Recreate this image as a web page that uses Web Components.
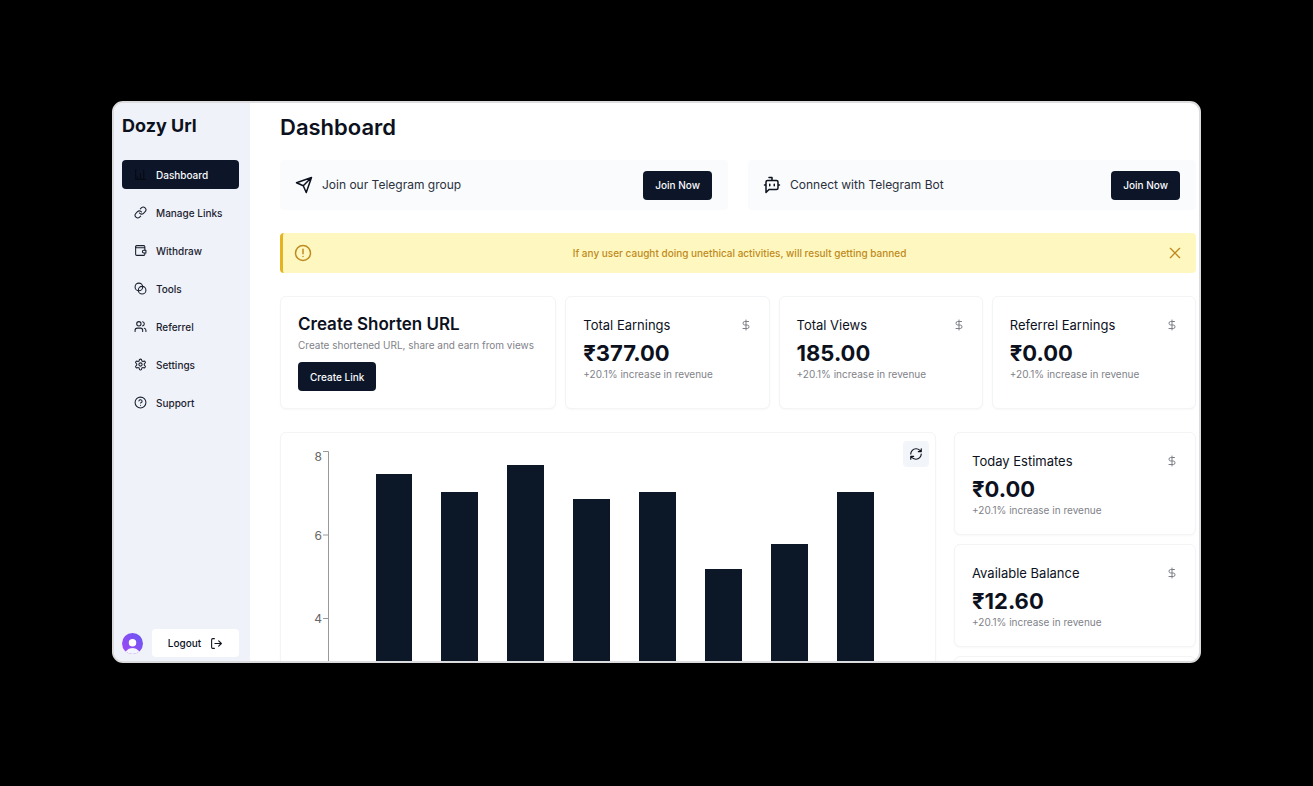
<!DOCTYPE html>
<html lang="en">
<head>
<meta charset="utf-8">
<title>Dozy Url</title>
<style>
  html { background: #000; }
  body {
    margin: 0;
    height: 100vh;
    box-sizing: border-box;
    padding: 101px 112px 123px;
    font-family: Inter, sans-serif;
    color: #0c111d;
  }
</style>
</head>
<body>
<dozy-app></dozy-app>

<script>
const ICONS = {
  chart: '<path d="M12 20V10M18 20V4M6 20v-4M3 3v18h18"/>',
  link: '<path d="M10 13a5 5 0 0 0 7.54.54l3-3a5 5 0 0 0-7.07-7.07l-1.72 1.71"/><path d="M14 11a5 5 0 0 0-7.54-.54l-3 3a5 5 0 0 0 7.07 7.07l1.71-1.71"/>',
  wallet: '<path d="M20 11V7H5a2 2 0 0 1-2-2 2 2 0 0 1 2-2h13a2 2 0 0 1 2 2v2"/><path d="M3 5v14a2 2 0 0 0 2 2h13a2 2 0 0 0 2-2v-2"/><path d="M18 11.500a2.500 2.500 0 0 0 0 5h4v-5Z"/>',
  blend: '<circle cx="9" cy="9" r="7"/><circle cx="15" cy="15" r="7"/>',
  users: '<path d="M16 21v-2a4 4 0 0 0-4-4H6a4 4 0 0 0-4 4v2"/><circle cx="9" cy="7" r="4"/><path d="M22 21v-2a4 4 0 0 0-3-3.87M16 3.13a4 4 0 0 1 0 7.75"/>',
  settings: '<path d="M12.22 2h-.44a2 2 0 0 0-2 2v.18a2 2 0 0 1-1 1.73l-.43.25a2 2 0 0 1-2 0l-.15-.08a2 2 0 0 0-2.73.73l-.22.38a2 2 0 0 0 .73 2.73l.15.1a2 2 0 0 1 1 1.72v.51a2 2 0 0 1-1 1.74l-.15.09a2 2 0 0 0-.73 2.73l.22.38a2 2 0 0 0 2.73.73l.15-.08a2 2 0 0 1 2 0l.43.25a2 2 0 0 1 1 1.73V20a2 2 0 0 0 2 2h.44a2 2 0 0 0 2-2v-.18a2 2 0 0 1 1-1.73l.43-.25a2 2 0 0 1 2 0l.15.08a2 2 0 0 0 2.73-.73l.22-.39a2 2 0 0 0-.73-2.73l-.15-.08a2 2 0 0 1-1-1.74v-.5a2 2 0 0 1 1-1.74l.15-.09a2 2 0 0 0 .73-2.73l-.22-.38a2 2 0 0 0-2.73-.73l-.15.08a2 2 0 0 1-2 0l-.43-.25a2 2 0 0 1-1-1.73V4a2 2 0 0 0-2-2z"/><circle cx="12" cy="12" r="3"/>',
  help: '<circle cx="12" cy="12" r="10"/><path d="M9.09 9a3 3 0 0 1 5.83 1c0 2-3 3-3 3M12 17h.01"/>',
  logout: '<path d="M8 21H5a2 2 0 0 1-2-2V5a2 2 0 0 1 2-2h3M9 12h12M16 7l5 5-5 5"/>',
  send: '<path d="M22 2L15 22l-4-9-9-4zM22 2L11 13"/>',
  bot: '<path d="M12 6V2H8M8 18l-4 4V8a2 2 0 0 1 2-2h12a2 2 0 0 1 2 2v8a2 2 0 0 1-2 2ZM2 12h2M9 11v2M15 11v2M20 12h2"/>',
  alert: '<circle cx="12" cy="12" r="10"/><path d="M12 7v6M12 16.500v.010"/>',
  close: '<path d="M19 5L5 19M5 5l14 14"/>',
  dollar: '<path d="M12 2v20M17 5H9.500a3.500 3.500 0 0 0 0 7h5a3.500 3.500 0 0 1 0 7H6"/>',
  refresh: '<path d="M3 12a9 9 0 0 1 9-9 9.750 9.750 0 0 1 6.740 2.740L21 8M21 3v5h-5M21 12a9 9 0 0 1-9 9 9.750 9.750 0 0 1-6.740-2.740L3 16M8 16H3v5"/>'
};

class Base extends HTMLElement {
  connectedCallback() {
    if (this.shadowRoot) return;
    this.attachShadow({ mode: 'open' }).innerHTML = this.view();
  }
}

customElements.define('dozy-icon', class extends Base {
  view() {
    const size = this.getAttribute('size') || 13;
    return `<style>
      :host { display: block; flex: none; width: ${size}px; height: ${size}px; }
      svg { display: block; width: 100%; height: 100%; }
    </style>
    <svg viewBox="0 0 24 24" fill="none" stroke="currentColor" stroke-width="2" stroke-linecap="round" stroke-linejoin="round" aria-hidden="true">${ICONS[this.getAttribute('name')]}</svg>`;
  }
});

customElements.define('dozy-button', class extends Base {
  view() {
    return `<style>
      :host { display: block; }
      button {
        display: block; height: 29px; padding: 0 12px; border: 0; border-radius: 4px;
        background: #0d1629; color: #f8fafc; font: 500 10px/16px Inter, sans-serif;
        white-space: nowrap; cursor: pointer;
      }
    </style><button type="button"><slot></slot></button>`;
  }
});

customElements.define('dozy-nav-item', class extends Base {
  view() {
    return `<style>
      :host { display: block; }
      a {
        display: flex; align-items: center; gap: 9px; height: 29px; padding: 0 12px;
        border-radius: 4px; font: 500 10px/16px Inter, sans-serif; color: #1c2230;
        text-decoration: none; white-space: nowrap;
      }
      :host([active]) a { background: #0d1629; color: #f8fafc; }
      :host([active]) dozy-icon { color: #060a14; }
    </style>
    <a href="#"><dozy-icon name="${this.getAttribute('icon')}"></dozy-icon><slot></slot></a>`;
  }
});

customElements.define('dozy-sidebar', class extends Base {
  view() {
    return `<style>
      :host {
        display: flex; flex-direction: column; flex: none; width: 136px; box-sizing: border-box;
        padding: 12px 11px 4px 8px; background: #eff3f9;
      }
      .brand { font-size: 18px; line-height: 22px; font-weight: 700; margin-bottom: 23px; }
      nav { display: flex; flex-direction: column; gap: 9px; }
      footer { display: flex; align-items: center; gap: 9px; margin-top: auto; }
      footer svg { flex: none; width: 21px; height: 21px; }
      button {
        flex: 1; display: flex; align-items: center; justify-content: center; gap: 9px;
        height: 28px; padding: 0; border: 0; border-radius: 4px; background: #fff; color: #0c111d;
        font: 500 10px/16px Inter, sans-serif; cursor: pointer;
      }
    </style>
    <div class="brand">Dozy Url</div>
    <nav>
      <dozy-nav-item icon="chart" active>Dashboard</dozy-nav-item>
      <dozy-nav-item icon="link">Manage Links</dozy-nav-item>
      <dozy-nav-item icon="wallet">Withdraw</dozy-nav-item>
      <dozy-nav-item icon="blend">Tools</dozy-nav-item>
      <dozy-nav-item icon="users">Referrel</dozy-nav-item>
      <dozy-nav-item icon="settings">Settings</dozy-nav-item>
      <dozy-nav-item icon="help">Support</dozy-nav-item>
    </nav>
    <footer>
      <svg viewBox="0 0 28 28" role="img" aria-label="Account">
        <defs>
          <linearGradient id="g" x1="0" y1="1" x2="1" y2="0"><stop stop-color="#a546f5"/><stop offset="1" stop-color="#6658f2"/></linearGradient>
          <clipPath id="c"><circle cx="14" cy="14" r="14"/></clipPath>
        </defs>
        <g clip-path="url(#c)"><path fill="url(#g)" d="M0 0h28v28H0z"/>
        <circle cx="14" cy="13" r="5" fill="#fff"/><path fill="#f4f5fc" d="M4 28c0-4 5-8 10-8s10 4 10 8z"/></g>
      </svg>
      <button type="button">Logout <dozy-icon name="logout"></dozy-icon></button>
    </footer>`;
  }
});

customElements.define('dozy-invite', class extends Base {
  view() {
    return `<style>
      :host {
        display: flex; align-items: center; flex: 1; height: 50px; box-sizing: border-box;
        padding: 0 16px 0 15px; border-radius: 4px; background: #f9fbfd; gap: 9px;
      }
      p { flex: 1; margin: 0; font-size: 12px; line-height: 18px; color: #2b303c; }
    </style>
    <dozy-icon name="${this.getAttribute('icon')}" size="18"></dozy-icon>
    <p><slot></slot></p><dozy-button>Join Now</dozy-button>`;
  }
});

customElements.define('dozy-alert', class extends Base {
  view() {
    return `<style>
      :host {
        display: flex; align-items: center; height: 40px; box-sizing: border-box; padding: 0 13px 0 11px;
        border-left: 3px solid #e3b420; border-radius: 4px; background: #fef8c0; color: #bf8a20;
      }
      p { flex: 1; margin: 0; text-align: center; font-size: 10px; line-height: 16px; font-weight: 500; }
      button { padding: 0; border: 0; background: none; color: inherit; cursor: pointer; }
    </style>
    <dozy-icon name="alert" size="18"></dozy-icon>
    <p><slot></slot></p>
    <button type="button" aria-label="Dismiss"><dozy-icon name="close" size="16"></dozy-icon></button>`;
  }
});

customElements.define('dozy-card', class extends Base {
  view() {
    return `<style>
      :host {
        display: block; box-sizing: border-box; border: 1px solid #f3f4f6; border-radius: 6px;
        background: #fff; box-shadow: 0 1px 2px #00000008; min-width: 0;
      }
    </style><slot></slot>`;
  }
});

customElements.define('dozy-stat', class extends Base {
  view() {
    return `<style>
      :host { display: block; padding: 18px 17px; }
      header { display: flex; align-items: center; justify-content: space-between; }
      h3 { margin: 0; font-size: 13px; line-height: 20px; font-weight: 400; }
      dozy-icon { color: #7c7f86; }
      strong { display: block; font-size: 22px; line-height: 26px; font-weight: 700; margin-top: 5px; }
      p { margin: 0; font-size: 10px; line-height: 16px; color: #7f8289; }
    </style>
    <header><h3>${this.getAttribute('label')}</h3><dozy-icon name="dollar" size="12"></dozy-icon></header>
    <strong><slot></slot></strong><p>+20.1% increase in revenue</p>`;
  }
});

customElements.define('dozy-chart', class extends Base {
  view() {
    const values = [7.45, 7.02, 7.66, 6.85, 7.02, 5.17, 5.77, 7.02];
    return `<style>
      :host { display: block; position: relative; padding: 18px 47px 0 27px; }
      .plot { display: flex; height: 334px; }
      .axis { flex: none; width: 22px; height: 334px; overflow: visible; font: 12px Inter, sans-serif; fill: #666; }
      ul { flex: 1; display: flex; align-items: flex-end; margin: 0; padding: 0 0 0 31px; list-style: none; }
      li { flex: 1; display: flex; justify-content: center; align-items: flex-end; height: 100%; }
      i { display: block; width: 56%; background: #0c1827; }
      button {
        position: absolute; top: 8px; right: 6px; width: 26px; height: 26px; padding: 0; border: 0;
        display: grid; place-items: center; border-radius: 4px; background: #f2f5f9; color: #0c111d; cursor: pointer;
      }
    </style>
    <div class="plot">
      <svg class="axis" role="img" aria-label="Y axis">
        <path d="M15 .5H20.500V334M15 84H20M15 167.500H20" fill="none" stroke="#999"/>
        <text x="14" y="10" text-anchor="end">8</text>
        <text x="14" y="89" text-anchor="end">6</text>
        <text x="14" y="172" text-anchor="end">4</text>
      </svg>
      <ul>${values.map(v => `<li><i style="height:calc(100% * ${v} / 8)"></i></li>`).join('')}</ul>
    </div>
    <button type="button" aria-label="Refresh"><dozy-icon name="refresh" size="14"></dozy-icon></button>`;
  }
});

customElements.define('dozy-app', class extends Base {
  view() {
    return `<style>
      :host {
        display: flex; height: 100%; box-sizing: border-box; overflow: hidden;
        border: 2px solid #dcdcde; border-radius: 11px; background: #fff;
      }
      main { flex: 1; min-width: 0; padding: 9px 3px 0 30px; }
      h1 { margin: 0 0 18px; font-size: 22px; line-height: 30px; font-weight: 600; }
      h2 { margin: 0; font-size: 17px; line-height: 22px; font-weight: 600; }
      .invites { display: flex; gap: 20px; margin-bottom: 23px; }
      .cards { display: grid; grid-template-columns: 276fr 204fr 204fr 204fr; gap: 9px; margin: 23px 0; height: 113px; }
      .create { padding: 16px 17px; }
      .create p { margin: 0 0 7px; font-size: 10px; line-height: 20px; color: #7f8289; white-space: nowrap; }
      .lower { display: grid; grid-template-columns: 656fr 242fr; gap: 18px; }
      .side { display: flex; flex-direction: column; gap: 9px; }
      .side dozy-card { height: 103px; }
    </style>
    <dozy-sidebar></dozy-sidebar>
    <main>
      <h1>Dashboard</h1>
      <div class="invites">
        <dozy-invite icon="send">Join our Telegram group</dozy-invite>
        <dozy-invite icon="bot">Connect with Telegram Bot</dozy-invite>
      </div>
      <dozy-alert>If any user caught doing unethical activities, will result getting banned</dozy-alert>
      <div class="cards">
        <dozy-card><div class="create">
          <h2>Create Shorten URL</h2>
          <p>Create shortened URL, share and earn from views</p>
          <dozy-button>Create Link</dozy-button>
        </div></dozy-card>
        <dozy-card><dozy-stat label="Total Earnings">₹377.00</dozy-stat></dozy-card>
        <dozy-card><dozy-stat label="Total Views">185.00</dozy-stat></dozy-card>
        <dozy-card><dozy-stat label="Referrel Earnings">₹0.00</dozy-stat></dozy-card>
      </div>
      <div class="lower">
        <dozy-card><dozy-chart></dozy-chart></dozy-card>
        <div class="side">
          <dozy-card><dozy-stat label="Today Estimates">₹0.00</dozy-stat></dozy-card>
          <dozy-card><dozy-stat label="Available Balance">₹12.60</dozy-stat></dozy-card>
          <dozy-card></dozy-card>
        </div>
      </div>
    </main>`;
  }
});
</script>
</body>
</html>
